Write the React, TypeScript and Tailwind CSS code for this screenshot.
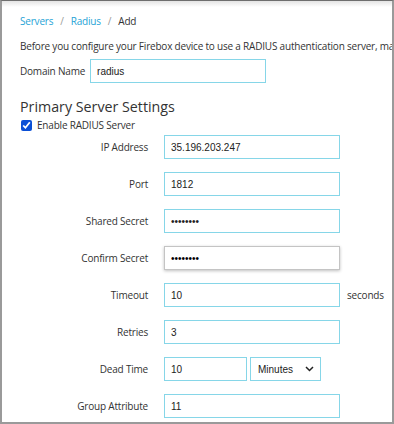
import React from "react";

const inputCls =
  "h-[24px] border border-[#86d6e8] bg-white px-[6px] text-[10px] text-[#222] outline-none [font-family:'Liberation_Sans',Arial,sans-serif]";

const txt = "text-[10px] tracking-[-0.2px] text-[#333]";

function Row({ label, children }: { label: string; children: React.ReactNode }) {
  return (
    <div className="flex items-center">
      <div className={"w-[128px] text-right " + txt}>{label}</div>
      <div className="ml-[16px] flex items-center">{children}</div>
    </div>
  );
}

export default function App() {
  return (
    <div className="relative h-[424px] w-[394px] overflow-hidden border-x-2 border-b-2 border-t border-[#9a9a9a] border-t-[#6e6e6e] bg-white [font-family:'Open_Sans',sans-serif]">
      <div className="absolute left-0 right-0 top-0 h-[6px] bg-gradient-to-b from-[#e4e4e4] to-white" />
      <div className="relative pl-[18px] pt-[13px]">
        <div className="flex items-center gap-[7px] text-[10px] leading-[15px] tracking-[-0.2px]">
          <span className="text-[#1fa3d6]">Servers</span>
          <span className="text-[#999]">/</span>
          <span className="text-[#1fa3d6]">Radius</span>
          <span className="text-[#999]">/</span>
          <span className="text-[#333]">Add</span>
        </div>
        <div className={"mt-[10px] whitespace-nowrap leading-[15px] " + txt}>
          Before you configure your Firebox device to use a RADIUS authentication server, make sure
        </div>
        <div className="mt-[5px] flex items-center">
          <span className={txt}>Domain Name</span>
          <input
            className={inputCls + " ml-[5px] h-[23px] w-[176px]"}
            defaultValue="radius"
            readOnly
          />
        </div>
        <div className="mt-[14px] text-[14.25px] leading-[20px] text-[#333]">Primary Server Settings</div>
        <div className="mt-[1px] flex items-center">
          <input type="checkbox" defaultChecked className="m-0 ml-[1px] h-[11px] w-[11px] accent-[#0a4fd6]" />
          <span className={"ml-[5px] " + txt}>Enable RADIUS Server</span>
        </div>
        <div className="mt-[2px] flex flex-col gap-[13px]">
          <Row label="IP Address">
            <input className={inputCls + " w-[176px]"} defaultValue="35.196.203.247" readOnly />
          </Row>
          <Row label="Port">
            <input className={inputCls + " w-[176px]"} defaultValue="1812" readOnly />
          </Row>
          <Row label="Shared Secret">
            <input className={inputCls + " w-[176px]"} type="password" defaultValue="abcdefgh" readOnly />
          </Row>
          <Row label="Confirm Secret">
            <input
              className="h-[24px] w-[176px] border border-[#c4c4c4] bg-white px-[6px] text-[10px] shadow-[0_1px_3px_rgba(0,0,0,0.25)] outline-none [font-family:'Liberation_Sans',Arial,sans-serif]"
              type="password"
              defaultValue="abcdefgh"
              readOnly
            />
          </Row>
          <Row label="Timeout">
            <input className={inputCls + " w-[176px]"} defaultValue="10" readOnly />
            <span className={"ml-[7px] " + txt}>seconds</span>
          </Row>
          <Row label="Retries">
            <input className={inputCls + " w-[176px]"} defaultValue="3" readOnly />
          </Row>
          <Row label="Dead Time">
            <input className={inputCls + " w-[83px]"} defaultValue="10" readOnly />
            <div className="ml-[3px] flex h-[24px] w-[71px] items-center justify-between border border-[#86d6e8] bg-white pl-[7px] pr-[6px] text-[10px] text-[#222] [font-family:'Liberation_Sans',Arial,sans-serif]">
              <span>Minutes</span>
              <svg width="9" height="6" viewBox="0 0 9 6">
                <path d="M1 1l3.5 3.5L8 1" fill="none" stroke="#222" strokeWidth="1.5" />
              </svg>
            </div>
          </Row>
          <Row label="Group Attribute">
            <input className={inputCls + " w-[176px]"} defaultValue="11" readOnly />
          </Row>
        </div>
      </div>
    </div>
  );
}
